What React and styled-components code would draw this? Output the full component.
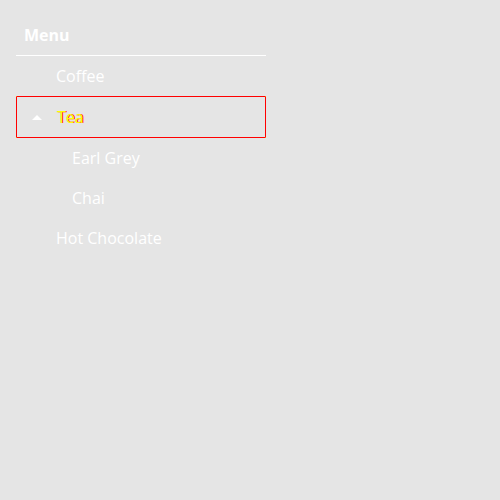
import styled, { createGlobalStyle } from "styled-components";

const Global = createGlobalStyle`
  html, body {
    margin: 0;
    background: #e5e5e5;
  }
  body {
    padding: 16px;
    font-family: "Open Sans", "Liberation Sans", sans-serif;
    color: #fff;
  }
`;

const Nav = styled.nav`
  width: 250px;
`;

const Header = styled.div`
  padding: 7px 8px 8px;
  font-size: 16px;
  font-weight: 700;
  line-height: 24px;
  border-bottom: 1px solid #fff;
`;

const List = styled.ul`
  list-style: none;
  margin: 0;
  padding: 0;
`;

const Row = styled.li`
  display: flex;
  align-items: center;
  height: 40px;
  padding-left: ${(props) => props.indent}px;
  font-size: 16px;
`;

const Active = styled.li`
  background: #ff0;
`;

const ActiveRow = styled.div`
  position: relative;
  display: flex;
  align-items: center;
  height: 40px;
  padding-left: 40px;
  border: 1px solid #f00;
  border-radius: 1px;
  background: #e5e5e5;
  color: #ff0;
  text-shadow: 1px 0 0 #f00;
  font-size: 16px;
`;

const Caret = styled.span`
  position: absolute;
  left: 15px;
  top: 18px;
  width: 0;
  height: 0;
  border-left: 5px solid transparent;
  border-right: 5px solid transparent;
  border-bottom: 5px solid #fff;
`;

export default function App() {
  return (
    <>
      <Global />
      <Nav>
        <Header>Menu</Header>
        <List>
          <Row indent={40}>Coffee</Row>
          <Active>
            <ActiveRow>
              <Caret />
              Tea
            </ActiveRow>
          </Active>
          <Row indent={56}>Earl Grey</Row>
          <Row indent={56}>Chai</Row>
          <Row indent={40}>Hot Chocolate</Row>
        </List>
      </Nav>
    </>
  );
}
